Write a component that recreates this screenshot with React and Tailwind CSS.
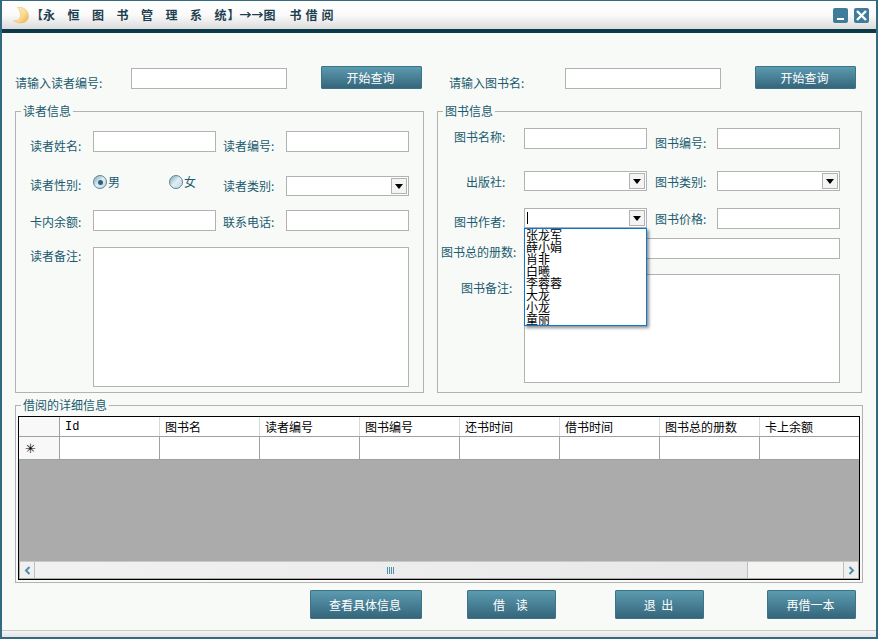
const font = { fontFamily: '"Noto Sans CJK SC", "Liberation Sans", sans-serif' }

function Label({ className = '', children }) {
  return <span className={`h-[14px] leading-[14px] text-[12px] text-[#1b5a70] whitespace-nowrap shrink-0 ${className}`}>{children}</span>
}

function Input({ className = 'w-[123px] h-[21px]' }) {
  return <div className={`bg-white border border-[#b2b2b2] shrink-0 ${className}`} />
}

function Select({ className = 'w-[123px] h-[20px]', caret }) {
  return (
    <div className={`relative flex items-center justify-end pr-[1px] bg-white border border-[#b2b2b2] shrink-0 ${className}`}>
      {caret && <span className="absolute left-[2px] top-[3px] w-[1px] h-[12px] bg-black" />}
      <span className="w-[16px] h-[16px] flex items-center justify-center border border-[#b2b2b2] bg-[#f4f4f4]">
        <svg width="8" height="5" viewBox="0 0 8 5"><path d="M0 0h8L4 5z" fill="#000" /></svg>
      </span>
    </div>
  )
}

function Btn({ className = '', children }) {
  return (
    <button className={`flex items-center justify-center pr-[2px] text-[12px] text-white whitespace-pre border border-[#3d7388] rounded-[1px] bg-gradient-to-b from-[#5c9bb0] to-[#35667b] ${className}`}>
      {children}
    </button>
  )
}

function Group({ title, className = '', children }) {
  return (
    <section className={`relative border border-[#b2b2b2] ${className}`}>
      <span className="absolute left-[5px] top-[-8px] px-[2px] h-[14px] leading-[14px] text-[12px] text-[#1b5a70] bg-[#f7faf7]">{title}</span>
      {children}
    </section>
  )
}

function Radio({ checked }) {
  return (
    <span className="flex items-center justify-center w-[14px] h-[14px] rounded-full border border-[#55879b] bg-gradient-to-br from-[#7fa9ba] via-[#e4eef2] to-[#bcd6e0]">
      {checked && <span className="w-[5px] h-[5px] rounded-full bg-[#2f6379]" />}
    </span>
  )
}

const authors = ['张龙军', '薛小娟', '肖非', '白曦', '李蓉蓉', '大龙', '小龙', '童丽']
const columns = ['Id', '图书名', '读者编号', '图书编号', '还书时间', '借书时间', '图书总的册数', '卡上余额']

function ReaderPanel() {
  return (
    <Group title="读者信息" className="w-[409px] h-[282px] pl-[14px] pt-[19px]">
      <div className="flex">
        <Label className="w-[63px] mt-[8px]">读者姓名:</Label>
        <Input />
        <Label className="w-[63px] ml-[7px] mt-[8px]">读者编号:</Label>
        <Input />
      </div>
      <div className="flex mt-[23px]">
        <Label className="w-[63px] mt-[2px]">读者性别:</Label>
        <div className="w-[123px] flex items-start text-[12px] leading-[14px] text-[#1b5a70]">
          <div className="flex w-[76px] -mt-[1px]"><Radio checked /><span className="ml-[1px]">男</span></div>
          <div className="flex -mt-[1px]"><Radio /><span className="ml-[1px]">女</span></div>
        </div>
        <Label className="w-[63px] ml-[7px] mt-[3px]">读者类别:</Label>
        <Select />
      </div>
      <div className="flex mt-[14px]">
        <Label className="w-[63px] mt-[5px]">卡内余额:</Label>
        <Input />
        <Label className="w-[63px] ml-[7px] mt-[5px]">联系电话:</Label>
        <Input />
      </div>
      <div className="flex mt-[16px]">
        <Label className="w-[63px] mt-[2px]">读者备注:</Label>
        <Input className="w-[316px] h-[140px]" />
      </div>
    </Group>
  )
}

function BookPanel() {
  return (
    <Group title="图书信息" className="w-[425px] h-[282px] pt-[16px]">
      <div className="flex">
        <Label className="w-[86px] pl-[16px] mt-[2px]">图书名称:</Label>
        <Input />
        <Label className="w-[62px] ml-[8px] mt-[8px]">图书编号:</Label>
        <Input />
      </div>
      <div className="flex mt-[21px]">
        <Label className="w-[86px] pl-[28px] mt-[4px]">出版社:</Label>
        <Select />
        <Label className="w-[62px] ml-[8px] mt-[4px]">图书类别:</Label>
        <Select />
      </div>
      <div className="relative flex mt-[17px]">
        <Label className="w-[86px] pl-[16px] mt-[7px]">图书作者:</Label>
        <Select caret />
        <Label className="w-[62px] ml-[8px] mt-[4px]">图书价格:</Label>
        <Input />
        {/* open combo list */}
        <ul className="absolute left-[86px] top-[20px] z-10 w-[123px] h-[98px] bg-white border border-[#0a78d7] shadow-[2px_2px_3px_rgba(0,0,0,0.45)] overflow-hidden">
          {authors.map(a => (
            <li key={a} className="h-[12px] leading-[12px] text-[12px] text-black pl-[1px]">{a}</li>
          ))}
        </ul>
      </div>
      <div className="flex mt-[9px]">
        <Label className="w-[86px] pl-[3px] mt-[7px]">图书总的册数:</Label>
        <Input className="w-[316px] h-[21px]" />
      </div>
      <div className="flex mt-[15px]">
        <Label className="w-[86px] pl-[23px] mt-[7px]">图书备注:</Label>
        <Input className="w-[316px] h-[109px]" />
      </div>
    </Group>
  )
}

function Grid() {
  return (
    <div className="h-[164px] border border-black flex flex-col bg-[#ababab] overflow-hidden">
      <div className="flex h-[20px] bg-white border-b border-[#a0a0a0] shrink-0">
        <div className="w-[41px] shrink-0 border-r border-[#a0a0a0] bg-[#f8f8f8]" />
        {columns.map(c => (
          <div key={c} className={`w-[100px] shrink-0 pl-[5px] border-r border-[#d8d8d8] text-[12px] text-black ${c === 'Id' ? 'font-["Liberation_Mono",monospace] leading-[21px]' : 'leading-[19px]'}`}>{c}</div>
        ))}
      </div>
      <div className="flex h-[23px] bg-white border-b border-[#a0a0a0] shrink-0">
        <div className="w-[41px] shrink-0 pl-[6px] border-r border-[#a0a0a0] bg-[#f8f8f8] font-['DejaVu_Sans',sans-serif] font-bold text-[13px] leading-[24px] text-black">✳</div>
        {columns.map(c => <div key={c} className="w-[100px] shrink-0 border-r border-[#a0a0a0]" />)}
      </div>
      <div className="flex-1" />
      <div className="flex h-[17px] mx-[1px] mb-[1px] bg-[#f4f4f2] border-t border-[#c8c8c8] shrink-0">
        <div className="w-[15px] flex items-center justify-center border-r border-[#c0c0c0] bg-[#f0f0f0]">
          <svg width="7" height="9" viewBox="0 0 7 9"><path d="M5.5 1L2 4.5 5.5 8" fill="none" stroke="#4a90ad" strokeWidth="2" /></svg>
        </div>
        <div className="w-[713px] flex items-center justify-center bg-gradient-to-r from-[#f1f1f1] to-[#e8e8e8] border-r border-[#c0c0c0]">
          <svg width="8" height="7" viewBox="0 0 8 7"><path d="M0.5 0v7M2.5 0v7M4.5 0v7M6.5 0v7" stroke="#4a90ad" strokeWidth="1" /></svg>
        </div>
        <div className="flex-1" />
        <div className="w-[15px] flex items-center justify-center border-l border-[#c0c0c0] bg-[#f0f0f0]">
          <svg width="7" height="9" viewBox="0 0 7 9"><path d="M1.5 1L5 4.5 1.5 8" fill="none" stroke="#4a90ad" strokeWidth="2" /></svg>
        </div>
      </div>
    </div>
  )
}

export default function App() {
  return (
    <div style={font} className="w-[878px] h-[639px] flex flex-col bg-[#f7faf7] border-x-2 border-t border-b-2 border-[#336a80] overflow-hidden">
      {/* title bar */}
      <header className="h-[28px] flex items-center shrink-0 bg-gradient-to-b from-white via-[#fafafa] to-[#dcdcdc]">
        <svg className="ml-[10px] mt-[1px]" width="17" height="17" viewBox="0 0 17 17">
          <defs>
            <linearGradient id="moon" x1="0" y1="0" x2="1" y2="1">
              <stop offset="0" stopColor="#fdf3c4" />
              <stop offset="0.6" stopColor="#f8d98c" />
              <stop offset="1" stopColor="#eaa640" />
            </linearGradient>
          </defs>
          <path d="M5.5 0.5C11.5 -0.5 16.5 3.5 16.5 9C16.5 13.5 12.5 16.5 8 16C5.5 16 3.5 15.2 1.5 13.5C5 14.5 8.5 12.5 8.5 8.5C8.5 5 7.5 2.5 5.5 0.5z" fill="url(#moon)" stroke="#efb55e" strokeWidth="0.5" />
        </svg>
        <h1 className="ml-[2px] flex text-[12px] font-bold text-[#1d3f50] whitespace-pre">
          <span>【</span>
          <span className="tracking-[12.5px]">永恒图书管理系</span>
          <span>统</span>
          <span className="ml-[1px]">】→→图</span>
          <span className="ml-[14px] tracking-[4px]">书借阅</span>
        </h1>
        <div className="ml-auto mr-[7px] flex gap-[6px]">
          <button className="w-[15px] h-[15px] rounded-[2px] bg-[#3f7c9a] flex items-end justify-center pb-[3px]">
            <span className="w-[7px] h-[2px] bg-white" />
          </button>
          <button className="w-[15px] h-[15px] rounded-[2px] bg-[#3f7c9a] flex items-center justify-center">
            <svg width="13" height="13" viewBox="0 0 13 13"><path d="M2 2l9 9M11 2l-9 9" stroke="#fff" strokeWidth="2.4" /></svg>
          </button>
        </div>
      </header>
      <div className="h-[4px] bg-[#0d3a4a] shrink-0" />

      <main className="flex-1 pl-[13px] pt-[33px]">
        {/* search row */}
        <div className="flex h-[23px]">
          <Label className="w-[116px] mt-[10px]">请输入读者编号:</Label>
          <Input className="w-[156px] h-[21px] mt-[2px]" />
          <Btn className="w-[101px] h-[23px] ml-[34px]">开始查询</Btn>
          <Label className="w-[116px] ml-[27px] mt-[10px]">请输入图书名:</Label>
          <Input className="w-[156px] h-[21px] mt-[2px]" />
          <Btn className="w-[101px] h-[23px] ml-[34px]">开始查询</Btn>
        </div>

        <div className="flex gap-[13px] mt-[22px]">
          <ReaderPanel />
          <BookPanel />
        </div>

        <Group title="借阅的详细信息" className="w-[848px] h-[178px] mt-[12px] px-[2px] pt-[10px]">
          <Grid />
        </Group>

        <div className="flex mt-[7px]">
          <Btn className="w-[112px] h-[29px] ml-[295px]">查看具体信息</Btn>
          <Btn className="w-[89px] h-[29px] ml-[45px]">{'借    读'}</Btn>
          <Btn className="w-[89px] h-[29px] ml-[59px]">{'退  出'}</Btn>
          <Btn className="w-[89px] h-[29px] ml-[63px]">再借一本</Btn>
        </div>
      </main>

      <footer className="h-[7px] shrink-0 border-t border-[#c8c8c8] bg-gradient-to-b from-[#f4f4f4] to-[#e4e4e4]" />
    </div>
  )
}
